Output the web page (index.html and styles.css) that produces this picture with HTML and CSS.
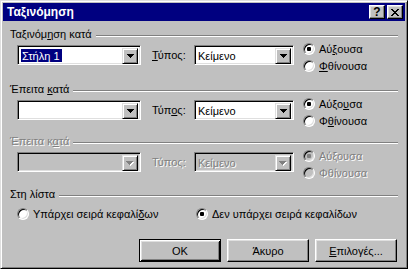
FILE: index.html
```html
<!DOCTYPE html>
<html lang="el">
<head>
    <meta charset="UTF-8">
    <title>Ταξινόμηση</title>
    <link rel="stylesheet" href="styles.css">
</head>
<body>
    <div class="window">
        <div class="titlebar">
            <span class="title">Ταξινόμηση</span>
            <span class="tb-btn help">?</span>
            <span class="tb-btn close">
                <svg width="8" height="7" viewBox="0 0 8 7" shape-rendering="crispEdges">
                    <path d="M0 0h2v1h-2zM6 0h2v1h-2zM1 1h2v1h-2zM5 1h2v1h-2zM2 2h4v1h-4zM3 3h2v1h-2zM2 4h4v1h-4zM1 5h2v1h-2zM5 5h2v1h-2zM0 6h2v1h-2zM6 6h2v1h-2z" fill="#000"/>
                </svg>
            </span>
        </div>
        <div class="dialog">
            <div class="group group-1">
                <div class="group-head">
                    <span class="group-label">Ταξινόμ<u>η</u>ση κατά</span>
                    <span class="rule"></span>
                </div>
                <div class="sort-row">
                    <div class="combo combo-field">
                        <span class="combo-text"><span class="selected">Στήλη 1</span></span>
                        <span class="combo-btn"><svg width="7" height="4" viewBox="0 0 7 4" shape-rendering="crispEdges"><path d="M0 0h7v1h-7zM1 1h5v1h-5zM2 2h3v1h-3zM3 3h1v1h-1z" fill="#000"/></svg></span>
                    </div>
                    <span class="type-label"><u>Τ</u>ύπος:</span>
                    <div class="combo combo-type">
                        <span class="combo-text">Κείμενο</span>
                        <span class="combo-btn"><svg width="7" height="4" viewBox="0 0 7 4" shape-rendering="crispEdges"><path d="M0 0h7v1h-7zM1 1h5v1h-5zM2 2h3v1h-3zM3 3h1v1h-1z" fill="#000"/></svg></span>
                    </div>
                    <div class="order">
                        <div class="option"><span class="radio"><span class="dot"></span></span>Αύ<u>ξ</u>ουσα</div>
                        <div class="option"><span class="radio"></span><u>Φ</u>θίνουσα</div>
                    </div>
                </div>
            </div>

            <div class="group group-2">
                <div class="group-head">
                    <span class="group-label">Έπειτα <u>κ</u>ατά</span>
                    <span class="rule"></span>
                </div>
                <div class="sort-row">
                    <div class="combo combo-field">
                        <span class="combo-text"></span>
                        <span class="combo-btn"><svg width="7" height="4" viewBox="0 0 7 4" shape-rendering="crispEdges"><path d="M0 0h7v1h-7zM1 1h5v1h-5zM2 2h3v1h-3zM3 3h1v1h-1z" fill="#000"/></svg></span>
                    </div>
                    <span class="type-label">Τύπ<u>ο</u>ς:</span>
                    <div class="combo combo-type">
                        <span class="combo-text">Κείμενο</span>
                        <span class="combo-btn"><svg width="7" height="4" viewBox="0 0 7 4" shape-rendering="crispEdges"><path d="M0 0h7v1h-7zM1 1h5v1h-5zM2 2h3v1h-3zM3 3h1v1h-1z" fill="#000"/></svg></span>
                    </div>
                    <div class="order">
                        <div class="option"><span class="radio"><span class="dot"></span></span>Αύξο<u>υ</u>σα</div>
                        <div class="option"><span class="radio"></span>Φ<u>θ</u>ίνουσα</div>
                    </div>
                </div>
            </div>

            <div class="group group-3 disabled">
                <div class="group-head">
                    <span class="group-label">Έπειτα κ<u>α</u>τά</span>
                    <span class="rule"></span>
                </div>
                <div class="sort-row">
                    <div class="combo combo-field">
                        <span class="combo-text"></span>
                        <span class="combo-btn"><svg width="8" height="5" viewBox="0 0 8 5" shape-rendering="crispEdges"><path d="M1 1h7v1h-7zM2 2h5v1h-5zM3 3h3v1h-3zM4 4h1v1h-1z" fill="#fff"/><path d="M0 0h7v1h-7zM1 1h5v1h-5zM2 2h3v1h-3zM3 3h1v1h-1z" fill="#808080"/></svg></span>
                    </div>
                    <span class="type-label">Τύπος:</span>
                    <div class="combo combo-type">
                        <span class="combo-text">Κείμενο</span>
                        <span class="combo-btn"><svg width="8" height="5" viewBox="0 0 8 5" shape-rendering="crispEdges"><path d="M1 1h7v1h-7zM2 2h5v1h-5zM3 3h3v1h-3zM4 4h1v1h-1z" fill="#fff"/><path d="M0 0h7v1h-7zM1 1h5v1h-5zM2 2h3v1h-3zM3 3h1v1h-1z" fill="#808080"/></svg></span>
                    </div>
                    <div class="order">
                        <div class="option"><span class="radio"><span class="dot"></span></span>Αύξουσα</div>
                        <div class="option"><span class="radio"></span>Φθίνουσα</div>
                    </div>
                </div>
            </div>

            <div class="group group-4">
                <div class="group-head">
                    <span class="group-label">Στη λίστα</span>
                    <span class="rule"></span>
                </div>
                <div class="header-row">
                    <div class="option header-yes"><span class="radio"></span>Υπάρχει σειρά κεφαλί<u>δ</u>ων</div>
                    <div class="option"><span class="radio"><span class="dot"></span></span>Δεν υπάρ<u>χ</u>ει σειρά κεφαλίδων</div>
                </div>
            </div>

            <div class="buttons">
                <span class="button default">OK</span>
                <span class="button">Άκυρο</span>
                <span class="button"><u>Ε</u>πιλογές...</span>
            </div>
        </div>
    </div>
</body>
</html>
```

FILE: styles.css
```css
* {
    box-sizing: border-box;
}

body {
    margin: 0;
    background-color: #c0c0c0;
    font-family: "Liberation Sans", Arial, sans-serif;
    font-size: 11px;
    color: #000;
}

u {
    text-decoration: underline;
    text-underline-offset: 1px;
}

.window {
    width: 408px;
    height: 269px;
    padding: 2px;
    background-color: #c0c0c0;
    border: 1px solid;
    border-color: #dfdfdf #000 #000 #dfdfdf;
    box-shadow: inset 1px 1px #fff, inset -1px -1px #808080;
    display: flex;
    flex-direction: column;
}

.titlebar {
    height: 18px;
    background-color: #000080;
    color: #fff;
    display: flex;
    align-items: center;
    padding: 0 2px;
}

.title {
    font-weight: bold;
    font-size: 12px;
    margin-right: auto;
    padding-left: 2px;
}

.tb-btn {
    width: 16px;
    height: 14px;
    background-color: #c0c0c0;
    color: #000;
    border: 1px solid;
    border-color: #fff #000 #000 #fff;
    box-shadow: inset -1px -1px #808080, inset 1px 1px #dfdfdf;
    display: flex;
    align-items: center;
    justify-content: center;
}

.help {
    font-weight: bold;
    font-size: 12px;
    line-height: 12px;
}

.close {
    margin-left: 2px;
}

.dialog {
    padding: 7px 7px 0 7px;
}

/* group headings with etched rule */
.group-head {
    display: flex;
    align-items: center;
    height: 13px;
    line-height: 13px;
}

.rule {
    flex: 1;
    height: 2px;
    margin-left: 4px;
    margin-top: 2px;
    border-top: 1px solid #808080;
    border-bottom: 1px solid #fff;
}

.group-1 {
    margin-bottom: 18px;
}

.group-2 {
    margin-bottom: 15px;
}

.group-3 {
    margin-bottom: 16px;
}

.sort-row {
    display: flex;
    align-items: flex-start;
    height: 20px;
    margin-top: 4px;
    padding-left: 7px;
}

/* combo boxes */
.combo {
    height: 20px;
    background-color: #fff;
    border: 1px solid;
    border-color: #808080 #fff #fff #808080;
    box-shadow: inset 1px 1px #000, inset -1px -1px #dfdfdf;
    padding: 2px;
    display: flex;
}

.combo-field {
    width: 124px;
}

.combo-type {
    width: 100px;
}

.combo-text {
    flex: 1;
    line-height: 16px;
    padding-left: 1px;
    white-space: nowrap;
    overflow: hidden;
}

.selected {
    background-color: #000080;
    color: #fff;
    padding: 1px 2px 1px 1px;
}

.combo-btn {
    width: 16px;
    height: 16px;
    background-color: #c0c0c0;
    border: 1px solid;
    border-color: #dfdfdf #000 #000 #dfdfdf;
    box-shadow: inset 1px 1px #fff, inset -1px -1px #808080;
    display: flex;
    align-items: center;
    justify-content: center;
}

.type-label {
    width: 42px;
    margin-left: 11px;
    line-height: 20px;
}

.order {
    margin-left: 9px;
    margin-top: -5px;
}

.option {
    display: flex;
    align-items: center;
    height: 17px;
    white-space: nowrap;
}

/* radio buttons */
.radio {
    width: 12px;
    height: 12px;
    margin-right: 4px;
    border-radius: 50%;
    border: 1px solid;
    border-color: #808080 #fff #fff #808080;
    box-shadow: inset 1px 1px #000, inset -1px -1px #dfdfdf;
    background-color: #fff;
    display: flex;
    align-items: center;
    justify-content: center;
    flex-shrink: 0;
}

.dot {
    width: 4px;
    height: 4px;
    border-radius: 1px;
    background-color: #000;
}

/* disabled group */
.disabled .group-label,
.disabled .type-label,
.disabled .combo-text,
.disabled .option {
    color: #808080;
    text-shadow: 1px 1px 0 #fff;
}

.disabled .combo {
    background-color: #c0c0c0;
}

.disabled .radio {
    background-color: #c0c0c0;
}

.disabled .dot {
    background-color: #808080;
}

.header-row {
    display: flex;
    margin-top: 6px;
    padding-left: 7px;
}

.header-row .option {
    height: 14px;
}

.header-yes {
    width: 179px;
}

/* push buttons */
.buttons {
    display: flex;
    justify-content: flex-end;
    gap: 6px;
    margin-top: 18px;
    margin-right: 1px;
}

.button {
    width: 82px;
    height: 23px;
    border: 1px solid;
    border-color: #fff #000 #000 #fff;
    box-shadow: inset -1px -1px #808080, inset 1px 1px #dfdfdf;
    display: flex;
    align-items: center;
    justify-content: center;
}

.button.default {
    border-color: #000;
    box-shadow: inset 1px 1px #fff, inset -1px -1px #000, inset 2px 2px #dfdfdf, inset -2px -2px #808080;
}
```
